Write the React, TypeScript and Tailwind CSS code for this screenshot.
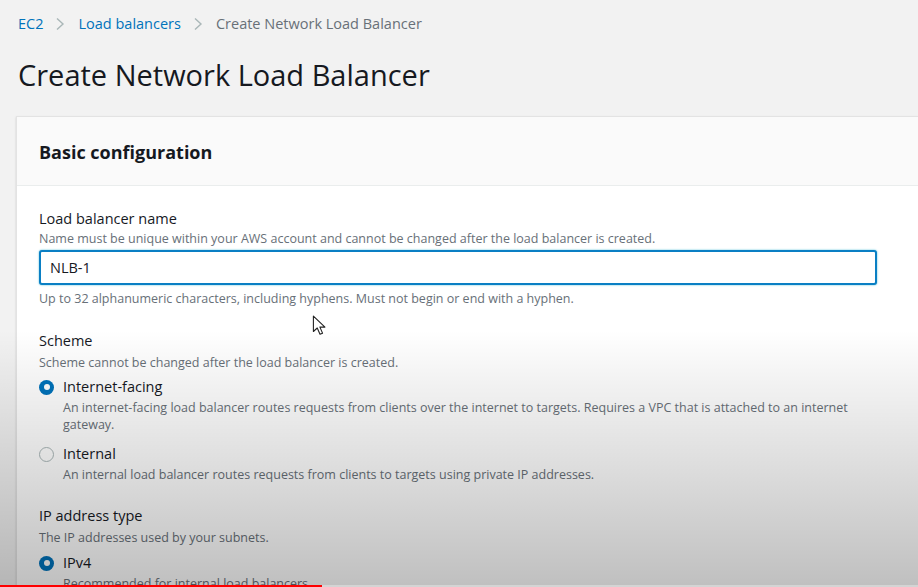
import React from 'react';

function Chevron() {
  return (
    <svg width="10" height="14" viewBox="0 0 10 14" className="ml-[12px] mr-[13px] shrink-0">
      <path d="M2 1.5 L8 7 L2 12.5" fill="none" stroke="#aab7b8" strokeWidth="1.4" />
    </svg>
  );
}

function Radio({ checked }: { checked?: boolean }) {
  return checked ? (
    <span className="w-[15px] h-[15px] rounded-full bg-[#0073bb] flex items-center justify-center shrink-0">
      <span className="w-[6px] h-[6px] rounded-full bg-white" />
    </span>
  ) : (
    <span className="w-[15px] h-[15px] rounded-full border-[1.5px] border-[#aab7b8] bg-white shrink-0" />
  );
}

function Option({ checked, label, desc }: { checked?: boolean; label: string; desc: React.ReactNode }) {
  return (
    <div className="flex flex-col">
      <div className="flex items-center gap-[9px] h-[20px]">
        <Radio checked={checked} />
        <span className="text-[14.5px] text-[#16191f]">{label}</span>
      </div>
      <p className="pl-[24px] mt-[2px] text-[12.5px] leading-[17px] text-[#687078] whitespace-nowrap">{desc}</p>
    </div>
  );
}

function Cursor() {
  return (
    <svg width="16" height="22" viewBox="0 0 14 20" className="absolute left-[312px] top-[315px]">
      <path d="M1 1 L1 15 L4.5 11.8 L7 17.5 L9.3 16.5 L6.9 11 L11.5 11 Z" fill="#fff" stroke="#222" strokeWidth="1" strokeLinejoin="round" />
    </svg>
  );
}

export default function App() {
  return (
    <div
      className="relative w-[918px] h-[587px] overflow-hidden bg-[#f2f2f2] text-[#16191f]"
      style={{ fontFamily: '"Open Sans", "Noto Sans", Arial, sans-serif' }}
    >
      <div className="pl-[18px] pt-[13px]">
        <nav className="flex items-center h-[22px] text-[14.5px]">
          <span className="text-[#0073bb]">EC2</span>
          <Chevron />
          <span className="text-[#0073bb]">Load balancers</span>
          <Chevron />
          <span className="text-[#687078]">Create Network Load Balancer</span>
        </nav>
        <h1 className="mt-[22px] text-[29px] leading-[36px] font-normal text-[#16191f]">Create Network Load Balancer</h1>
      </div>

      <section className="mt-[23px] ml-[16px] bg-white border-l border-t border-[#e3e3e3] shadow-[0_1px_2px_rgba(0,0,0,0.15)]">
        <header className="h-[69px] flex items-center pt-[2px] px-[22px] bg-[#fafafa] border-b border-[#eaeded]">
          <h2 className="text-[18px] font-bold text-[#16191f]">Basic configuration</h2>
        </header>
        <div className="px-[22px] pt-[23px] pb-[40px] flex flex-col">
          <label className="text-[14.5px] leading-[20px]">Load balancer name</label>
          <p className="text-[12.5px] leading-[20px] text-[#687078]">
            Name must be unique within your AWS account and cannot be changed after the load balancer is created.
          </p>
          <div className="mt-[1px] w-[838px] h-[35px] border-2 border-[#0a7fc4] rounded-[3px] shadow-[0_0_2px_#44b9d6] flex items-center px-[9px] text-[14.5px] bg-white">
            NLB-1
          </div>
          <p className="mt-[5px] text-[12.5px] leading-[17px] text-[#687078]">
            Up to 32 alphanumeric characters, including hyphens. Must not begin or end with a hyphen.
          </p>

          <label className="mt-[24px] text-[14.5px] leading-[20px]">Scheme</label>
          <p className="mt-[2px] text-[12.5px] leading-[20px] text-[#687078]">Scheme cannot be changed after the load balancer is created.</p>
          <div className="mt-[4px] flex flex-col gap-[11px]">
            <Option
              checked
              label="Internet-facing"
              desc={
                <>
                  An internet-facing load balancer routes requests from clients over the internet to targets. Requires a VPC that is attached to an internet
                  <br />
                  gateway.
                </>
              }
            />
            <Option label="Internal" desc="An internal load balancer routes requests from clients to targets using private IP addresses." />
          </div>

          <label className="mt-[23px] text-[14.5px] leading-[20px]">IP address type</label>
          <p className="mt-[2px] text-[12.5px] leading-[20px] text-[#687078]">The IP addresses used by your subnets.</p>
          <div className="mt-[5px]">
            <Option checked label="IPv4" desc="Recommended for internal load balancers." />
          </div>
        </div>
      </section>

      <Cursor />

      <div className="absolute inset-x-0 top-[330px] bottom-0 bg-gradient-to-b from-transparent to-black/25 pointer-events-none" />
      <div className="absolute inset-x-0 bottom-0 h-[2px] flex">
        <div className="w-[322px] bg-[#ff0000]" />
        <div className="flex-1 bg-[#d4d4d4]" />
      </div>
    </div>
  );
}
